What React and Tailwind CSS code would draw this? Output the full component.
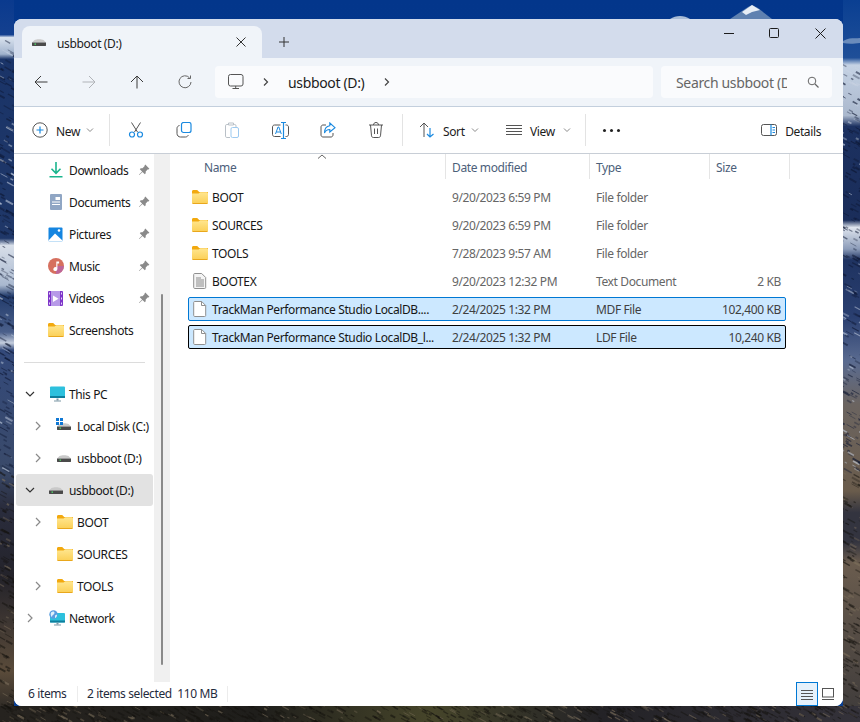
import { useId } from 'react'

// File Explorer window on a mountain wallpaper.

const font = 'font-["Noto_Sans",sans-serif]'

function Ico({ size = 16, className = '', stroke = 'currentColor', sw = 1, children }) {
  return (
    <svg
      width={size}
      height={size}
      viewBox={`0 0 ${size} ${size}`}
      fill="none"
      stroke={stroke}
      strokeWidth={sw}
      className={`block shrink-0 ${className}`}
    >
      {children}
    </svg>
  )
}

function Folder() {
  const id = useId()
  return (
    <svg width="16" height="14" viewBox="0 0 16 14" className="block shrink-0">
      <defs>
        <linearGradient id={id} x1="0" y1="0" x2="0" y2="1">
          <stop offset="0" stopColor="#ffe68f" />
          <stop offset="1" stopColor="#fbcf55" />
        </linearGradient>
      </defs>
      <path d="M0 1.500C0 .7.6 0 1.400 0h3.800l2 2H16v3H0z" fill="#f2a90f" />
      <path d="M0 3.500h6.600l1.600-1.200h6.400c.8 0 1.400.6 1.400 1.400v8.900c0 .8-.6 1.400-1.400 1.400H1.400C.6 14 0 13.400 0 12.600z" fill={`url(#${id})`} />
      <path d="M0 13h16v-.4c0 .8-.6 1.400-1.400 1.400H1.400C.6 14 0 13.400 0 12.600z" fill="#e9a71c" />
    </svg>
  )
}

function Drive({ win }) {
  return (
    <span className="relative block h-[7px] w-[14px] shrink-0">
      {win && (
        <svg width="7" height="7" viewBox="0 0 7 7" className="absolute -top-[5px] -left-px block">
          <path d="M0 0h3v3H0zM4 0h3v3H4zM0 4h3v3H0zM4 4h3v3H4z" fill="#0f78d4" />
        </svg>
      )}
      <svg width="14" height="7" viewBox="0 0 14 7" className="block">
        <path d="M0 3.500 2.500 1C4.500 0 9.500 0 11.500 1L14 3.500z" fill="#c9c9c9" />
        <path d="M0 3.500h14v3c0 .3-.2.5-.5.5H.5C.2 7 0 6.800 0 6.500z" fill="#4a4a4a" />
        <path d="M2.500 4.500H4v1.200H2.500z" fill="#4fe06a" />
      </svg>
    </span>
  )
}

function Monitor({ globe }) {
  return (
    <svg width="17" height="16" viewBox="0 0 17 16" className="block shrink-0">
      <rect x="1" y={globe ? 3 : 0.500} width="15" height={globe ? 9.500 : 11.500} rx="1" fill="#2dc0dd" />
      <rect x="1" y={globe ? 10.500 : 10} width="15" height="2" fill="#0f7e9c" />
      <path d="M7.500 12.500h2V14.500h-2z" fill="#7d98a5" />
      <path d="M5 14.500h7V15.500H5z" fill="#7d98a5" />
      {globe && (
        <>
          <circle cx="4.500" cy="4.500" r="4.200" fill="#5a9de0" />
          <path d="M2 2.500c2-1.500 3.500-1 3.500.5S3 5 3 6.500 1 5 2 2.500zM6 5.500l2-1c.2 2-1 3.500-2 3.500z" fill="#dff0fb" />
        </>
      )}
    </svg>
  )
}

function Pin() {
  return (
    <svg width="12" height="12" viewBox="0 0 12 12" className="block shrink-0">
      <path d="M7.300.6 11.400 4.700 10.500 5.500 9.900 5.300 7.700 7.500 7.700 9.300 6.800 10.200 4.500 7.900 1.300 11.100.9 10.700 4.100 7.500 1.800 5.200 2.700 4.300 4.500 4.300 6.700 2.100 6.500 1.500z" fill="#8a8a8a" />
    </svg>
  )
}

function QuickIcon({ kind }) {
  if (kind === 'downloads')
    return (
      <Ico size={16}>
        <path d="M8 0v11M3.500 6.800 8 11.300l4.500-4.500" stroke="#1ab58d" strokeWidth="1.600" />
        <path d="M1.500 14.800h13" stroke="#1ab58d" strokeWidth="1.600" />
      </Ico>
    )
  if (kind === 'documents')
    return (
      <svg width="16" height="16" viewBox="0 0 16 16" className="block shrink-0">
        <rect x="2" y="0" width="12" height="16" rx="1" fill="#90a6c4" />
        <path d="M7.500 3h4.500v3H7.500zM4 7.500h8v1H4zM4 10h8v1H4z" fill="#fff" />
      </svg>
    )
  if (kind === 'pictures')
    return (
      <svg width="15" height="15" viewBox="0 0 15 15" className="block shrink-0">
        <rect width="14" height="14" x=".5" y=".5" rx="1" fill="#1585e0" />
        <path d="M.5 13.500 7 6.500l7.500 7V14c0 .3-.2.500-.5.500H1c-.3 0-.5-.2-.5-.5z" fill="#fff" />
        <circle cx="11" cy="3.500" r="1.300" fill="#fff" />
      </svg>
    )
  if (kind === 'music')
    return (
      <svg width="16" height="16" viewBox="0 0 16 16" className="block shrink-0">
        <circle cx="8" cy="8" r="8" fill="#d6705f" />
        <path d="M8 16a8 8 0 0 0 8-8H8z" fill="#b864a6" opacity=".8" />
        <path d="M8.300 3.500h2.800v2H9.400v5.600a2 2 0 1 1-1.100-1.800z" fill="#fff" />
      </svg>
    )
  if (kind === 'videos')
    return (
      <svg width="15" height="15" viewBox="0 0 15 15" className="block shrink-0">
        <rect width="15" height="15" rx="1" fill="#7e35c9" />
        <rect x="3" width="9" height="15" fill="#b79ae8" />
        <path d="M5 4.500v6.500l5.500-3.200z" fill="#fff" />
        <path d="M1 1.500h1v2H1zM1 6.500h1v2H1zM1 11.500h1v2H1zM13 1.500h1v2h-1zM13 6.500h1v2h-1zM13 11.500h1v2h-1z" fill="#e3d6f7" />
      </svg>
    )
  return <Folder />
}

function Chevron({ open }) {
  return (
    <Ico size={10} stroke={open ? '#333' : '#8a8a8a'} sw={1.200}>
      {open ? <path d="M1 3 5 7l4-4" /> : <path d="M3 1l4 4-4 4" />}
    </Ico>
  )
}

const quick = [
  ['downloads', 'Downloads'],
  ['documents', 'Documents'],
  ['pictures', 'Pictures'],
  ['music', 'Music'],
  ['videos', 'Videos'],
]

function TreeRow({ depth = 0, chevron, icon, label, active }) {
  return (
    <div
      className={`flex h-8 items-center overflow-hidden whitespace-nowrap rounded-[3px] ${
        active ? 'mx-[2px] w-[137px] bg-[#e2e2e2] pl-[9px]' : 'pl-[11px]'
      }`}
    >
      <span className={`flex w-[23px] shrink-0 justify-start ${depth ? 'ml-2' : ''}`}>
        {chevron && <Chevron open={chevron === 'open'} />}
      </span>
      <span className="flex w-[21px] shrink-0 items-center pl-px">{icon}</span>
      <span className="pt-[2px] text-[#161616]">{label}</span>
    </div>
  )
}

function Sidebar() {
  return (
    <div className="w-[140px] shrink-0 overflow-hidden">
      {quick.map(([kind, label]) => (
        <div key={kind} className="flex h-8 items-center pl-[34px] pr-[4px]">
          <span className="flex w-[21px] shrink-0 items-center">
            <QuickIcon kind={kind} />
          </span>
          <span className="flex-1 pt-[2px] text-[#161616]">{label}</span>
          <Pin />
        </div>
      ))}
      <div className="flex h-8 items-center pl-[34px]">
        <span className="flex w-[21px] shrink-0 items-center">
          <Folder />
        </span>
        <span className="pt-[2px] text-[#161616]">Screenshots</span>
      </div>
      <div className="flex h-8 items-center pl-[10px] pr-[9px]">
        <div className="h-px w-full bg-[#dcdcdc]" />
      </div>
      <TreeRow chevron="open" icon={<Monitor />} label="This PC" />
      <TreeRow depth={1} chevron="closed" icon={<Drive win />} label="Local Disk (C:)" />
      <TreeRow depth={1} chevron="closed" icon={<Drive />} label="usbboot (D:)" />
      <TreeRow chevron="open" icon={<Drive />} label="usbboot (D:)" active />
      <TreeRow depth={1} chevron="closed" icon={<Folder />} label="BOOT" />
      <TreeRow depth={1} icon={<Folder />} label="SOURCES" />
      <TreeRow depth={1} chevron="closed" icon={<Folder />} label="TOOLS" />
      <TreeRow chevron="closed" icon={<Monitor globe />} label="Network" />
    </div>
  )
}

function PlainFile() {
  return (
    <svg width="14" height="16" viewBox="0 0 14 16" fill="none" className="block shrink-0">
      <path d="M1.500.5h7.200l4 4v10c0 .6-.4 1-1 1h-10c-.6 0-1-.4-1-1v-13c0-.6.400-1 .8-1z" fill="#fff" stroke="#8f8f8f" />
      <path d="M8.500.5v4h4" stroke="#8f8f8f" />
    </svg>
  )
}

function TextFile() {
  return (
    <svg width="14" height="16" viewBox="0 0 14 16" fill="none" className="block shrink-0">
      <path d="M1.500.5h7.200l4 4v10c0 .6-.4 1-1 1h-10c-.6 0-1-.4-1-1v-13c0-.6.400-1 .8-1z" fill="#f4f4f4" stroke="#8f8f8f" />
      <path d="M3 5h5M3 7h8M3 9h8M3 11h8M3 13h8" stroke="#8a8a8a" />
    </svg>
  )
}

const files = [
  { icon: 'folder', name: 'BOOT', date: '9/20/2023 6:59 PM', type: 'File folder', size: '' },
  { icon: 'folder', name: 'SOURCES', date: '9/20/2023 6:59 PM', type: 'File folder', size: '' },
  { icon: 'folder', name: 'TOOLS', date: '7/28/2023 9:57 AM', type: 'File folder', size: '' },
  { icon: 'text', name: 'BOOTEX', date: '9/20/2023 12:32 PM', type: 'Text Document', size: '2 KB' },
  { icon: 'file', name: 'TrackMan Performance Studio LocalDB....', date: '2/24/2025 1:32 PM', type: 'MDF File', size: '102,400 KB', sel: 'border-[#0078d4]' },
  { icon: 'file', name: 'TrackMan Performance Studio LocalDB_l...', date: '2/24/2025 1:32 PM', type: 'LDF File', size: '10,240 KB', sel: 'border-black' },
]

function FileRow({ f }) {
  const selected = !!f.sel
  const muted = selected ? 'text-[#3f3f3f]' : 'text-[#666]'
  return (
    <div
      className={`flex h-6 items-center whitespace-nowrap rounded-[2px] border ${
        selected ? `${f.sel} bg-[#cce8ff]` : 'border-transparent'
      }`}
    >
      <div className="flex w-[263px] shrink-0 items-center pl-[3px]">
        <span className="flex w-[20px] shrink-0 items-center">
          {f.icon === 'folder' ? (
            <Folder />
          ) : (
            <span className="pl-px">{f.icon === 'text' ? <TextFile /> : <PlainFile />}</span>
          )}
        </span>
        <span className="pt-[2px] text-[#161616]">{f.name}</span>
      </div>
      <div className={`w-[144px] shrink-0 pt-[2px] ${muted}`}>{f.date}</div>
      <div className={`w-[120px] shrink-0 pt-[2px] ${muted}`}>{f.type}</div>
      <div className={`flex-1 pr-[4px] pt-[2px] text-right ${muted}`}>{f.size}</div>
    </div>
  )
}

function FileList() {
  return (
    <div className="min-w-0 flex-1">
      <div className="relative flex h-[25px] items-center text-[#4c607a]">
        <svg width="10" height="5" viewBox="0 0 10 5" fill="none" stroke="#666" className="absolute left-[147px] top-0 block">
          <path d="M1 4.500 5 1l4 3.500" />
        </svg>
        <div className="flex h-full w-[276px] items-center border-r border-[#e5e5e5] pl-[34px] pt-[2px]">Name</div>
        <div className="flex h-full w-[144px] items-center border-r border-[#e5e5e5] pl-[6px] pt-[2px]">Date modified</div>
        <div className="flex h-full w-[120px] items-center border-r border-[#e5e5e5] pl-[6px] pt-[2px]">Type</div>
        <div className="flex h-full w-[80px] items-center border-r border-[#e5e5e5] pl-[6px] pt-[2px]">Size</div>
      </div>
      <div className="ml-[18px] mt-[6px] flex w-[598px] flex-col gap-1">
        {files.map((f) => (
          <FileRow key={f.name} f={f} />
        ))}
      </div>
    </div>
  )
}

function Separator() {
  return <div className="h-8 w-px shrink-0 bg-[#e3e3e3]" />
}

function SmallCaret() {
  return (
    <Ico size={8} stroke="#8a8a8a">
      <path d="M1 2.500 4 5.500l3-3" />
    </Ico>
  )
}

function ToolBtn({ children }) {
  return <div className="flex h-full w-12 shrink-0 items-center justify-center">{children}</div>
}

function Toolbar() {
  const gray = '#555'
  const blue = '#1b8ae0'
  return (
    <div className="flex h-[47px] items-center border-b border-[#c8ced6] text-[#1c1c1c]">
      <div className="flex h-full w-[95px] shrink-0 items-center pl-[18px]">
        <Ico size={16} className="mr-2">
          <circle cx="8" cy="8" r="7.200" stroke={gray} />
          <path d="M8 4.500v7M4.500 8h7" stroke={blue} strokeWidth="1.200" />
        </Ico>
        <span className="pt-[3px]">New</span>
        <span className="ml-[6px]"><SmallCaret /></span>
      </div>
      <Separator />
      <div className="ml-[2px] flex h-full">
        <ToolBtn>
          <Ico size={16}>
            <path d="M3.500.5 9.500 10M12.500.5 6.500 10" stroke={gray} />
            <circle cx="4" cy="12.500" r="2.500" stroke={blue} strokeWidth="1.200" />
            <circle cx="12" cy="12.500" r="2.500" stroke={blue} strokeWidth="1.200" />
          </Ico>
        </ToolBtn>
        <ToolBtn>
          <Ico size={16}>
            <rect x="5.500" y=".5" width="9.500" height="10" rx="2" stroke={blue} strokeWidth="1.200" />
            <path d="M3.500 3.500C2 3.800 1 5 1 6.300V11.500C1 13.500 2.500 15 4.500 15h5c1.400 0 2.500-1 2.800-2" stroke={gray} />
          </Ico>
        </ToolBtn>
        <ToolBtn>
          <Ico size={16}>
            <path d="M4 2.500H2.800c-.9 0-1.300.5-1.300 1.300v10.400c0 .8.500 1.300 1.300 1.300H6" stroke="#b9c0c7" />
            <path d="M4.500 3V1h5v2zM9.500 2.500h1.200c.8 0 1.300.5 1.300 1.300V5" stroke="#b9c0c7" />
            <rect x="7" y="5.500" width="7.500" height="10" rx="1.500" stroke="#9dcaf0" />
          </Ico>
        </ToolBtn>
        <ToolBtn>
          <Ico size={17}>
            <path d="M8.500 3H2.500C1.400 3 .5 3.900.5 5v7.500c0 1.100.9 2 2 2h6M13.500 3h1c1.100 0 2 .9 2 2v7.500c0 1.100-.9 2-2 2h-1" stroke={gray} />
            <path d="M3.500 12 6 5h.8L9.300 12M4.400 10h4" stroke={blue} />
            <path d="M9 .5h2.500M14 .5h-2.500v16M9 16.500h5" stroke={blue} strokeWidth="1.200" />
          </Ico>
        </ToolBtn>
        <ToolBtn>
          <Ico size={16}>
            <path d="M6 3H3C1.900 3 1 3.900 1 5v8c0 1.100.9 2 2 2h8c1.100 0 2-.9 2-2v-2" stroke={gray} />
            <path d="M9.800 1 15 5.700 9.800 10V7.500C7 7.500 5.500 8.500 4.500 11c0-4.500 2-6.800 5.300-7.200z" stroke={blue} strokeWidth="1.100" />
          </Ico>
        </ToolBtn>
        <ToolBtn>
          <Ico size={16}>
            <path d="M1 3h14M5.500 3c0-1.500 1-2.500 2.500-2.500S10.500 1.500 10.500 3M2.500 3l1 10.800c.1.900.8 1.700 1.800 1.700h5.400c1 0 1.700-.8 1.800-1.700l1-10.800M6.500 6.500v5.500M9.500 6.500v5.500" stroke={gray} />
          </Ico>
        </ToolBtn>
      </div>
      <div className="ml-[2px]"><Separator /></div>
      <div className="flex h-full w-[87px] shrink-0 items-center pl-[16px]">
        <Ico size={16} className="mr-2">
          <path d="M5 15V1M1 5l4-4 4 4" stroke={gray} />
          <path d="M11 6v9M8 12l3 3 3.500-3" stroke={blue} strokeWidth="1.200" />
        </Ico>
        <span className="pt-[3px]">Sort</span>
        <span className="ml-[6px]"><SmallCaret /></span>
      </div>
      <div className="flex h-full w-[95px] shrink-0 items-center pl-[16px]">
        <Ico size={16} className="mr-2">
          <path d="M0 3.500h16M0 6.500h16M0 9.500h16M0 12.500h16" stroke={gray} />
        </Ico>
        <span className="pt-[3px]">View</span>
        <span className="ml-[8px]"><SmallCaret /></span>
      </div>
      <Separator />
      <div className="flex h-full w-[50px] shrink-0 items-center justify-center gap-[4px]">
        <span className="size-[3px] rounded-full bg-[#222]" />
        <span className="size-[3px] rounded-full bg-[#222]" />
        <span className="size-[3px] rounded-full bg-[#222]" />
      </div>
      <div className="ml-auto flex items-center pr-[22px]">
        <Ico size={16} className="mr-2">
          <rect x=".5" y="2.500" width="15" height="11" rx="2" stroke={gray} />
          <path d="M10 2.500v11" stroke={blue} strokeWidth="1.200" />
          <path d="M11.500 5.500h2.500M11.500 8h2.500M11.500 10.500h2.500" stroke={blue} />
        </Ico>
        <span className="pt-[3px]">Details</span>
      </div>
    </div>
  )
}

function NavBar() {
  const dark = '#3b3b3b'
  return (
    <div className="flex h-[49px] items-center border-b border-[#c3cfdd] bg-[#f0f4f9] text-[#1c1c1c]">
      <div className="flex w-[201px] shrink-0">
        <div className="flex w-[51px] justify-center pl-[3px]">
          <Ico size={14} stroke={dark}>
            <path d="M13.500 7H1M7 1 1 7l6 6" />
          </Ico>
        </div>
        <div className="flex w-[48px] justify-center">
          <Ico size={14} stroke="#b0b3b8">
            <path d="M.5 7H13M7 1l6 6-6 6" />
          </Ico>
        </div>
        <div className="flex w-[48px] justify-center">
          <Ico size={14} stroke={dark}>
            <path d="M7 13.500V1M1 7l6-6 6 6" />
          </Ico>
        </div>
        <div className="flex w-[48px] justify-center">
          <Ico size={14} stroke="#666">
            <path d="M11.500 2.800A6 6 0 1 0 13 7M12.500 .5v3h-3" />
          </Ico>
        </div>
      </div>
      <div className="flex h-8 w-[438px] shrink-0 items-center rounded-[4px] bg-[#fafbfd] pl-[13px] text-[14px]">
        <svg width="16" height="16" viewBox="0 0 16 16" fill="none" className="block shrink-0">
          <rect x=".5" y=".5" width="14.500" height="11.500" rx="2" stroke="#555" />
          <path d="M4.500 14.500h6.500M7.700 12v2.500" stroke="#555" />
        </svg>
        <span className="ml-[18px]">
          <Ico size={8} stroke="#444" sw={1.200}>
            <path d="M2 .5 5.500 4 2 7.500" />
          </Ico>
        </span>
        <span className="ml-[18px] pt-[2px] text-[14px] tracking-[-0.35px]">usbboot (D:)</span>
        <span className="ml-[19px]">
          <Ico size={8} stroke="#444" sw={1.200}>
            <path d="M2 .5 5.500 4 2 7.500" />
          </Ico>
        </span>
      </div>
      <div className="ml-2 flex h-8 w-[171px] shrink-0 items-center rounded-[4px] bg-[#fafbfd] pl-[15px] pr-[13px] text-[14px] text-[#666]">
        <span className="w-[111px] overflow-hidden whitespace-nowrap pt-[2px] tracking-[-0.35px]">Search usbboot (D:)</span>
        <Ico size={12} stroke="#666" className="ml-auto">
          <circle cx="5" cy="5" r="3.800" />
          <path d="m8 8 3.500 3.500" strokeWidth="1.200" />
        </Ico>
      </div>
    </div>
  )
}

function TitleBar() {
  return (
    <div className="flex h-[39px] items-end bg-[#d3dcec]">
      <div className="ml-2 flex h-8 w-[240px] shrink-0 items-center rounded-t-[8px] bg-[#f0f4f9] pl-[10px] pr-4 text-[#1c1c1c]">
        <Drive />
        <span className="ml-[11px] flex-1 pt-[4px]">usbboot (D:)</span>
        <Ico size={10} stroke="#333">
          <path d="M.5.5l9 9M9.500.5l-9 9" />
        </Ico>
      </div>
      <div className="ml-[17px] flex h-8 items-center">
        <Ico size={10} stroke="#333">
          <path d="M5 0v10M0 5h10" />
        </Ico>
      </div>
      <div className="ml-auto flex h-full items-start pt-[9px]">
        <div className="flex h-[10px] w-[45px] items-center justify-center">
          <div className="h-px w-[10px] bg-[#1c1c1c]" />
        </div>
        <div className="flex h-[10px] w-[46px] items-center justify-center">
          <div className="size-[10px] rounded-[1.5px] border border-[#1c1c1c]" />
        </div>
        <div className="flex h-[10px] w-[46px] items-center justify-center">
          <Ico size={11} stroke="#1c1c1c">
            <path d="M.5.5l10 10M10.500.5l-10 10" />
          </Ico>
        </div>
      </div>
    </div>
  )
}

function StatusBar() {
  return (
    <div className="flex h-6 items-center bg-white text-[#1f2b3d]">
      <span className="ml-[14px] w-[49px] whitespace-nowrap">6 items</span>
      <div className="h-4 w-px bg-[#ececec]" />
      <span className="ml-[9px] w-[140px] whitespace-nowrap">2 items selected&nbsp; 110 MB</span>
      <div className="h-4 w-px bg-[#ececec]" />
      <div className="ml-auto flex h-full items-center pr-[9px]">
        <div className="flex h-full w-[22px] items-center justify-center border-[1.5px] border-[#0078d4] bg-[#e5f1fb]">
          <Ico size={12} stroke="#555">
            <path d="M0 2.500h12M0 5.500h12M0 8.500h12M0 11.500h12" />
          </Ico>
        </div>
        <div className="ml-[4px] flex w-[12px] justify-center">
          <Ico size={12} stroke="#555">
            <rect x=".5" y=".5" width="11" height="8.500" />
            <path d="M0 11.500h12" />
          </Ico>
        </div>
      </div>
    </div>
  )
}

// rock texture: short diagonal strokes from a fixed seed so every render is the same
function rockStreaks(count, x0, w, y0, h, seed) {
  let s = seed
  const rnd = () => {
    s = (s * 16807) % 2147483647
    return s / 2147483647
  }
  const out = []
  for (let i = 0; i < count; i++) {
    const x = x0 + rnd() * w
    const y = y0 + rnd() * h
    const len = 2 + rnd() * 6
    const brown = y > 470
    const light = rnd() < (brown ? 0.18 : 0.22)
    const color = light ? (brown ? '#7d705c' : '#c9d3e3') : brown ? '#14120e' : '#0c1530'
    out.push(
      <path
        key={i}
        d={`M${x.toFixed(1)} ${y.toFixed(1)}l${len.toFixed(1)} ${(len * 0.55).toFixed(1)}`}
        stroke={color}
        strokeWidth={0.8 + rnd() * 1.2}
        opacity={0.3 + rnd() * 0.35}
      />,
    )
  }
  return out
}

function Wallpaper() {
  return (
    <svg width="860" height="722" viewBox="0 0 860 722" className="absolute inset-0 block">
      <defs>
        <linearGradient id="sky" x1="0" y1="0" x2="0" y2="1">
          <stop offset="0" stopColor="#03368b" />
          <stop offset="1" stopColor="#0a3f92" />
        </linearGradient>
        <linearGradient id="leftRock" x1="0" y1="0" x2="0" y2="1">
          <stop offset="0" stopColor="#0a3a8e" />
          <stop offset=".048" stopColor="#14408f" />
          <stop offset=".052" stopColor="#d9e2ee" />
          <stop offset=".075" stopColor="#a0b2cc" />
          <stop offset=".082" stopColor="#1a3468" />
          <stop offset=".33" stopColor="#1f3768" />
          <stop offset=".34" stopColor="#d8dfe9" />
          <stop offset=".395" stopColor="#a9b8cf" />
          <stop offset=".41" stopColor="#233c6c" />
          <stop offset=".46" stopColor="#4a5f8a" />
          <stop offset=".475" stopColor="#c5cede" />
          <stop offset=".485" stopColor="#33497a" />
          <stop offset=".65" stopColor="#3a4a6a" />
          <stop offset=".7" stopColor="#2a2d3e" />
          <stop offset=".8" stopColor="#24232a" />
          <stop offset=".93" stopColor="#5a4b3a" />
          <stop offset="1" stopColor="#1f1f1f" />
        </linearGradient>
        <linearGradient id="rightRock" x1="0" y1="0" x2="0" y2="1">
          <stop offset="0" stopColor="#0a3f92" />
          <stop offset=".08" stopColor="#1f4f98" />
          <stop offset=".09" stopColor="#c5d2e4" />
          <stop offset=".16" stopColor="#aab8cd" />
          <stop offset=".175" stopColor="#1c3160" />
          <stop offset=".305" stopColor="#1a2d5a" />
          <stop offset=".315" stopColor="#dfe5ee" />
          <stop offset=".345" stopColor="#8b9bb8" />
          <stop offset=".36" stopColor="#1f3361" />
          <stop offset=".44" stopColor="#2a3f70" />
          <stop offset=".5" stopColor="#5a6b90" />
          <stop offset=".56" stopColor="#6b6460" />
          <stop offset=".68" stopColor="#6a5c4c" />
          <stop offset=".71" stopColor="#33343f" />
          <stop offset=".75" stopColor="#33343f" />
          <stop offset=".78" stopColor="#6a5c4e" />
          <stop offset="1" stopColor="#3d3a3a" />
        </linearGradient>
        <linearGradient id="ground" x1="0" y1="0" x2="1" y2="0">
          <stop offset="0" stopColor="#26231f" />
          <stop offset=".3" stopColor="#1f1e1b" />
          <stop offset=".5" stopColor="#46452a" />
          <stop offset=".7" stopColor="#232226" />
          <stop offset="1" stopColor="#34323a" />
        </linearGradient>
        <clipPath id="strips">
          <path d="M0 40h14v682H0zM843 62h17v660h-17zM0 706h860v16H0z" />
        </clipPath>
      </defs>
      <rect width="860" height="722" fill="url(#sky)" />
      <path d="M670 19 C676 15 684 15 690 19z" fill="#a9bcd6" />
      <path d="M730 19 L748 7 L752 5 L758 8 L772 19z" fill="#5f81b0" />
      <path d="M742 12 L752 5 L760 10 L752 12 L746 15z" fill="#e6edf5" />
      <rect x="0" y="0" width="14" height="722" fill="url(#leftRock)" />
      <rect x="843" y="0" width="17" height="722" fill="url(#rightRock)" />
      <rect x="0" y="706" width="860" height="16" fill="url(#ground)" />
      <g clipPath="url(#strips)" fill="none">
        {rockStreaks(320, -4, 18, 40, 666, 11)}
        {rockStreaks(320, 839, 21, 62, 644, 29)}
        {rockStreaks(700, 0, 860, 702, 20, 53)}
      </g>
      <path d="M843 41 C850 37 855 39 860 38 L860 43 C853 44 848 44 843 43z" fill="#7f9cc4" opacity=".8" />
    </svg>
  )
}

export default function App() {
  return (
    <div className={`relative h-[722px] w-[860px] overflow-hidden pl-[14px] pt-[19px] text-[12px] leading-none tracking-[-0.38px] ${font}`}>
      <Wallpaper />
      <div className="relative flex h-[687px] w-[829px] flex-col overflow-hidden rounded-[8px] bg-white">
        <TitleBar />
        <NavBar />
        <Toolbar />
        <div className="flex min-h-0 flex-1">
          <Sidebar />
          <div className="relative w-4 shrink-0 bg-[#f0f0f0]">
            <div className="absolute left-[7px] top-[140px] h-[371px] w-[2px] rounded-full bg-[#8a8a8a]" />
          </div>
          <FileList />
        </div>
        <StatusBar />
      </div>
    </div>
  )
}
